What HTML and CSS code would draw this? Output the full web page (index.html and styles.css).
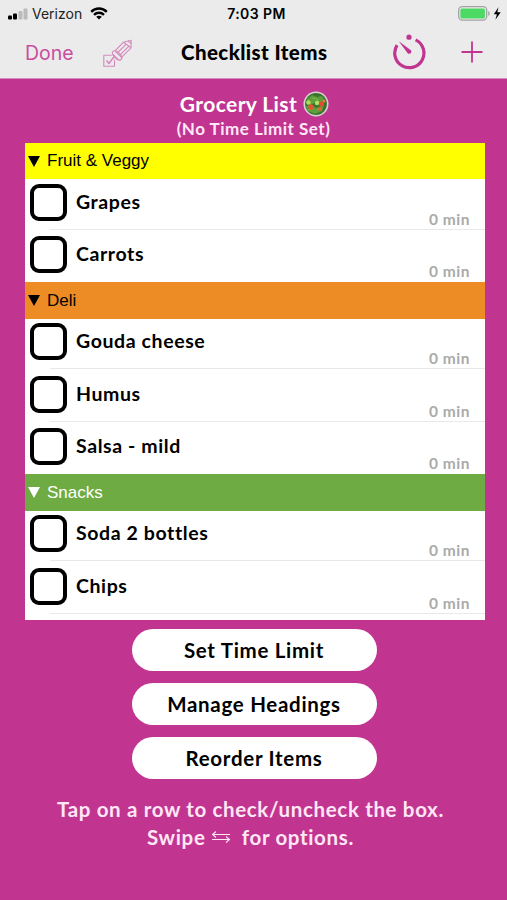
FILE: index.html
```html
<!DOCTYPE html>
<html lang="en">
<head>
    <meta charset="UTF-8">
    <meta name="viewport" content="width=device-width, initial-scale=1.0">
    <title>Checklist Items</title>
    <link rel="stylesheet" href="styles.css">
</head>
<body>
    <header>
        <div class="status">
            <div class="carrier">
                <svg width="20" height="12" viewBox="0 0 20 12">
                    <rect x="0" y="7.5" width="4" height="4" rx="1" fill="#000"/>
                    <rect x="5" y="5.5" width="4" height="6" rx="1" fill="#000"/>
                    <rect x="10.5" y="3" width="4" height="8.5" rx="1" fill="#bbb"/>
                    <rect x="15.5" y="0.5" width="4" height="11" rx="1" fill="#bbb"/>
                </svg>
                <span>Verizon</span>
                <svg class="wifi" width="18" height="13" viewBox="0 0 18 13" fill="none" stroke="#000" stroke-width="2.4">
                    <path d="M1.2 4.8C5.6 0.4 12.4 0.4 16.8 4.8"/>
                    <path d="M4 7.9C6.8 5.1 11.2 5.1 14 7.9"/>
                    <path d="M6.2 9.8C7.8 8.4 10.2 8.4 11.8 9.8L9 12.6Z" fill="#000" stroke="none"/>
                </svg>
            </div>
            <div class="time">7:03 PM</div>
            <div class="power">
                <svg width="44" height="15" viewBox="0 0 44 15">
                    <rect x="0.7" y="0.7" width="28" height="13.4" rx="3.5" fill="none" stroke="#a3a3a3" stroke-width="1.3"/>
                    <rect x="2.4" y="2.4" width="24.5" height="10" rx="1.5" fill="#4cd964"/>
                    <path d="M30.2 5v5c2-.8 2-4.2 0-5z" fill="#a3a3a3"/>
                    <path d="M40.5 1.2L35.8 8.2h3.1l-1.5 5.6 5.3-7.5h-3.4z" fill="#000"/>
                </svg>
            </div>
        </div>
        <nav>
            <a class="done" href="#">Done</a>
            <svg class="pencil" width="30" height="28" viewBox="0 0 30 28" fill="none" stroke="#d58abd" stroke-width="1.1" stroke-linejoin="round">
                <path d="M12.5 11.5L20.5 3.2L28.2 1.2L28 8.8L18.5 18.3"/>
                <path d="M20.5 3.2L28 8.8M14.8 13.5L23.5 4.9M17 16L26 7.2M25 2L28.2 4.5"/>
                <path d="M9.3 14.5C9 11.5 12 10.5 14.5 13C18 15.5 20.5 18.5 18 20.5C16 22.5 13.5 20 12 18.5C10.5 17 9.5 16 9.3 14.5Z"/>
                <path d="M12 12.2L18.7 18.5M10 15.5L15.5 21"/>
                <path d="M8.8 16.2H0.8V27.2H11.5V20.8"/>
                <path d="M3.5 21.5L6 24.5L11 17.8" stroke-width="1.5"/>
            </svg>
            <h1>Checklist Items</h1>
            <svg class="timer" width="34" height="36" viewBox="0 0 34 36" fill="none" stroke="#c13591">
                <path d="M23.6 5.9A14.6 14.6 0 1 1 5.1 11.1" stroke-width="3.2"/>
                <circle cx="17" cy="3.2" r="2.6" fill="#c13591" stroke="none"/>
                <path d="M6.8 7.3L18.9 16.3C20.6 18.2 17.7 21 15.7 19.2Z" fill="#c13591" stroke="none"/>
            </svg>
            <svg class="plus" width="22" height="22" viewBox="0 0 22 22" fill="none" stroke="#c13591" stroke-width="1.8">
                <path d="M11 0.5V21.5M0.5 11H21.5"/>
            </svg>
        </nav>
    </header>

    <main>
        <div class="title">
            <h2>Grocery List</h2>
            <svg width="26" height="26" viewBox="0 0 26 26">
                <circle cx="13" cy="13" r="12.5" fill="#d5d3d0"/>
                <circle cx="13" cy="13" r="10.9" fill="#39732d"/>
                <path d="M4 8l5-4 5 2 5-1 3 5-4 3-5-2-5 3-5-2zM3 15l6-1 4 3 8-3-2 6-7 3-7-3z" fill="#5c9e3b"/>
                <path d="M9 7l5 1 2 4M5 19l5-1M14 19l5-2" stroke="#81b94e" fill="none"/>
                <circle cx="5.5" cy="11.5" r="2.2" fill="#b7d95b"/>
                <circle cx="14" cy="12" r="2.2" fill="#b7dd65"/>
                <circle cx="8" cy="16" r="2.7" fill="#e15333"/>
                <circle cx="18.5" cy="13" r="2.5" fill="#e34b2e"/>
                <circle cx="17" cy="18" r="2" fill="#df6335"/>
                <circle cx="21" cy="10" r="1.5" fill="#f07445"/>
            </svg>
        </div>
        <p class="limit">(No Time Limit Set)</p>

        <div class="list">
            <div class="heading yellow"><i></i>Fruit &amp; Veggy</div>
            <div class="items">
                <div class="item"><span class="box"></span><b>Grapes</b><span class="min">0 min</span></div>
                <div class="item"><span class="box"></span><b>Carrots</b><span class="min">0 min</span></div>
            </div>
            <div class="heading orange"><i></i>Deli</div>
            <div class="items">
                <div class="item"><span class="box"></span><b>Gouda cheese</b><span class="min">0 min</span></div>
                <div class="item"><span class="box"></span><b>Humus</b><span class="min">0 min</span></div>
                <div class="item"><span class="box"></span><b>Salsa - mild</b><span class="min">0 min</span></div>
            </div>
            <div class="heading green"><i></i>Snacks</div>
            <div class="items">
                <div class="item"><span class="box"></span><b>Soda 2 bottles</b><span class="min">0 min</span></div>
                <div class="item"><span class="box"></span><b>Chips</b><span class="min">0 min</span></div>
            </div>
        </div>

        <div class="buttons">
            <button>Set Time Limit</button>
            <button>Manage Headings</button>
            <button>Reorder Items</button>
        </div>

        <p class="help">
            Tap on a row to check/uncheck the box.<br>
            Swipe
            <svg width="20" height="14" viewBox="0 0 20 14" fill="none" stroke="#ffe7f6" stroke-width="1.1">
                <path d="M19 3.5H1.5M5 0.5L1.5 3.5L5 6.5M1 8.5H18.5M15 5.5L18.5 8.5L15 11.5"/>
            </svg>
            <span class="options">for options.</span>
        </p>
    </main>
</body>
</html>
```
FILE: styles.css
```css
* {
    box-sizing: border-box;
}

body {
    margin: 0;
    height: 900px;
    overflow: hidden;
    background-color: #c13591;
    font-family: Lato, "Liberation Sans", sans-serif;
    color: #000;
}

h1, h2, p {
    margin: 0;
}

svg {
    display: block;
    flex-shrink: 0;
}

/* Top bar */
header {
    height: 79px;
    background-color: #ebebeb;
    border-bottom: 1px solid #d58abd;
}

.status {
    display: grid;
    grid-template-columns: 1fr auto 1fr;
    height: 27px;
    padding: 0 5px 0 8px;
    align-items: center;
    font-family: Inter, sans-serif;
    font-size: 14px;
}

.carrier {
    display: flex;
    align-items: center;
    gap: 4px;
    color: #222;
}

.wifi {
    margin-left: 4px;
}

.time {
    font-weight: 600;
    letter-spacing: 0.4px;
    padding-left: 3px;
}

.power {
    display: flex;
    justify-content: flex-end;
}

nav {
    display: flex;
    height: 50px;
    padding: 0 24px 0 25px;
    align-items: center;
}

.done {
    width: 78px;
    padding-top: 1px;
    font-family: Inter, sans-serif;
    font-size: 19.5px;
    color: #c94d9f;
    text-decoration: none;
}

.pencil {
    margin-top: 2px;
}

h1 {
    width: 211px;
    margin-left: 48px;
    font-size: 20.5px;
    font-weight: 900;
    letter-spacing: 0.4px;
    white-space: nowrap;
}

.plus {
    margin-left: 35px;
}

/* List name */
.title {
    display: flex;
    height: 38px;
    padding: 12px 0 0 2px;
    justify-content: center;
    gap: 6px;
    color: #fff;
}

h2 {
    font-size: 21px;
    line-height: 26px;
    letter-spacing: 0.4px;
}

.limit {
    height: 25.5px;
    line-height: 24px;
    font-size: 17px;
    font-weight: bold;
    letter-spacing: 0.5px;
    text-align: center;
    color: #ffe7f6;
}

/* Items */
.list {
    width: 460px;
    height: 477.5px;
    margin-left: 25px;
    overflow: hidden;
    background-color: #fff;
}

.heading {
    display: flex;
    height: 36.5px;
    padding: 1px 0 0 3px;
    align-items: center;
    gap: 7px;
    font-family: "Liberation Sans", Arial, sans-serif;
    font-size: 17px;
}

.heading i {
    border: 6px solid transparent;
    border-top: 11px solid #000;
    border-bottom: 0;
}

.yellow {
    background-color: #ffff00;
}

.orange {
    background-color: #ed8b24;
}

.green {
    background-color: #6eac43;
    color: #fff;
}

.green i {
    border-top-color: #fff;
}

.item {
    display: flex;
    height: 52.5px;
    padding: 6.5px 15px 0 5px;
    background: linear-gradient(#e8e8e8, #e8e8e8) 25px 100% / 100% 1px no-repeat;
}

.item:first-child {
    height: 50.5px;
    padding-top: 4.5px;
}

.items:not(:last-child) .item:last-child {
    background: none;
}

.box {
    width: 37px;
    height: 37px;
    border: 4px solid #000;
    border-radius: 9px;
}

.item b {
    flex: 1;
    padding-left: 9px;
    font-size: 19.5px;
    line-height: 36px;
    letter-spacing: 0.6px;
}

.min {
    align-self: flex-end;
    font-size: 15.5px;
    line-height: 22px;
    letter-spacing: 0.5px;
    font-weight: bold;
    color: #aaa;
}

/* Buttons */
.buttons {
    display: grid;
    gap: 12px;
    justify-content: center;
    padding: 9px 0 0 1px;
}

button {
    width: 245px;
    height: 42px;
    padding: 0 0 1px;
    border: none;
    border-radius: 21px;
    background-color: #fff;
    color: #000;
    font: bold 20.5px Lato, sans-serif;
    letter-spacing: 0.7px;
}

.help {
    padding-top: 16px;
    padding-right: 6px;
    font-size: 20.5px;
    font-weight: bold;
    line-height: 28px;
    letter-spacing: 0.65px;
    text-align: center;
    color: #ffe7f6;
}

.help svg {
    display: inline-block;
}

.options {
    margin-left: 5px;
}
```
